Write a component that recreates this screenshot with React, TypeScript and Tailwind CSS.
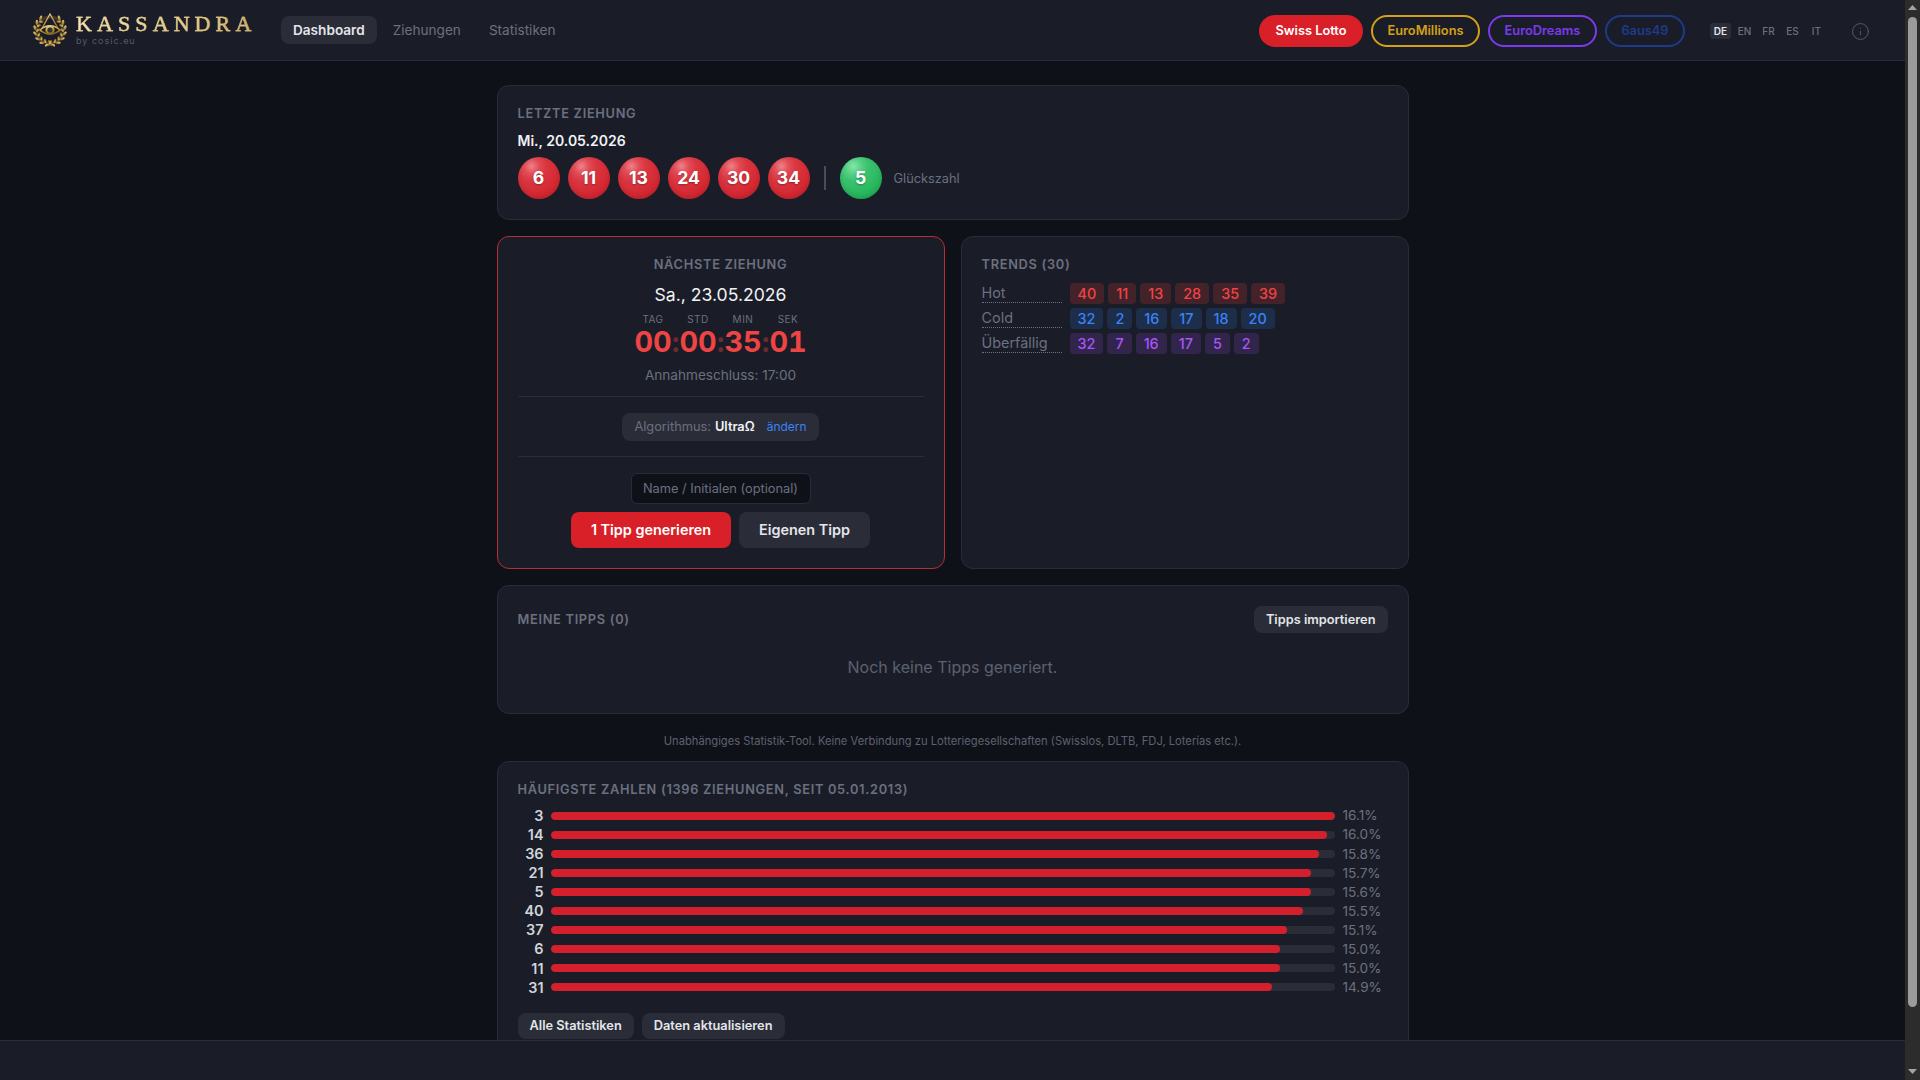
import { Info } from "lucide-react";

const lotteries = [
  { name: "Swiss Lotto", cls: "w-[104px] bg-[#d91f27] border-[#d91f27] text-white" },
  { name: "EuroMillions", cls: "w-[109px] border-[#d4a017] text-[#d4a017]" },
  { name: "EuroDreams", cls: "w-[109px] border-[#7c3aed] text-[#7c3aed]" },
  { name: "6aus49", cls: "w-[80px] border-[#1e3a8a] text-[#1e3a8a]" },
];

const trends = [
  { label: "Hot", nums: [40, 11, 13, 28, 35, 39], cls: "bg-[#442229] text-[#ef4444]" },
  { label: "Cold", nums: [32, 2, 16, 17, 18, 20], cls: "bg-[#1c2e4a] text-[#3b82f6]" },
  { label: "Überfällig", nums: [32, 7, 16, 17, 5, 2], cls: "bg-[#32254c] text-[#a855f7]" },
];

const frequent = [
  { n: 3, pct: "16.1%", w: 100 },
  { n: 14, pct: "16.0%", w: 99 },
  { n: 36, pct: "15.8%", w: 98 },
  { n: 21, pct: "15.7%", w: 97 },
  { n: 5, pct: "15.6%", w: 97 },
  { n: 40, pct: "15.5%", w: 96 },
  { n: 37, pct: "15.1%", w: 94 },
  { n: 6, pct: "15.0%", w: 93 },
  { n: 11, pct: "15.0%", w: 93 },
  { n: 31, pct: "14.9%", w: 92 },
];

const countdown = [
  { label: "TAG", value: "00" },
  { label: "STD", value: "00" },
  { label: "MIN", value: "35" },
  { label: "SEK", value: "01" },
];

const card = "rounded-[12px] border border-[#2a2d37] bg-[#1a1d27] px-5 pt-5 pb-5";
const sectionTitle = "text-[12.8px] leading-4 font-semibold tracking-[0.7px] uppercase text-[#6b7080]";
const grayBtn = "rounded-lg bg-[#2a2d37] text-[12.8px] font-semibold text-[#e4e6eb]";

function Logo() {
  const leaves = [0, 1, 2, 3, 4, 5, 6];
  return (
    <svg width="36" height="36" viewBox="0 0 36 36" className="shrink-0">
      <defs>
        <linearGradient id="gold" x1="0.3" y1="0" x2="0.6" y2="1">
          <stop offset="0" stopColor="#ead595" />
          <stop offset="0.55" stopColor="#b8923f" />
          <stop offset="1" stopColor="#7d5f22" />
        </linearGradient>
      </defs>
      <circle cx="18" cy="18" r="13" fill="none" stroke="#7d5f22" strokeWidth="3" opacity="0.45" />
      <g fill="url(#gold)">
        {leaves.map((i) => {
          const a = 38 + i * 22;
          return (
            <g key={i}>
              <ellipse cx="18" cy="2.9" rx="1.3" ry="2.7" transform={`rotate(${a} 18 18) rotate(-58 18 2.9)`} />
              <ellipse cx="18" cy="2.9" rx="1.3" ry="2.7" transform={`rotate(${-a} 18 18) rotate(58 18 2.9)`} />
              <ellipse cx="18" cy="6" rx="1.1" ry="2.2" transform={`rotate(${a + 8} 18 18) rotate(40 18 6)`} />
              <ellipse cx="18" cy="6" rx="1.1" ry="2.2" transform={`rotate(${-a - 8} 18 18) rotate(-40 18 6)`} />
            </g>
          );
        })}
      </g>
      <path d="M18 2 L27.5 19 L8.5 19 Z" fill="none" stroke="url(#gold)" strokeWidth="1.2" />
      <path d="M8 18 Q18 9.5 28 18 Q18 26.5 8 18 Z" fill="#211c10" stroke="url(#gold)" strokeWidth="1.5" />
      <circle cx="18" cy="18" r="4.6" fill="url(#gold)" />
      <circle cx="18" cy="18" r="2.6" fill="#2f3433" />
      <path d="M14 32.5 Q18 34.5 22 32.5" fill="none" stroke="url(#gold)" strokeWidth="1.2" />
    </svg>
  );
}

function Ball({ n, green }: { n: number; green?: boolean }) {
  return (
    <div
      className={`w-[42px] h-[42px] rounded-full flex items-center justify-center text-[17.6px] font-bold text-white [text-shadow:0_1px_2px_rgba(0,0,0,0.3)] shadow-[inset_0_-2px_5px_rgba(0,0,0,0.12)] ${
        green
          ? "bg-[radial-gradient(circle_at_32%_22%,#86e6aa_0%,#58d086_18%,#3ac26e_34%,#26b65c_70%,#1ea750_100%)]"
          : "bg-[radial-gradient(circle_at_32%_22%,#ee828a_0%,#e24b54_18%,#d93640_34%,#d42731_70%,#c3202a_100%)]"
      }`}
    >
      {n}
    </div>
  );
}

function Header() {
  return (
    <header className="h-[61px] shrink-0 flex items-center justify-between border-b border-[#2a2d37] bg-[#1a1d27] pl-[32px] pr-[35px]">
      <div className="flex items-center">
        <Logo />
        <div className="ml-2 w-[176px]">
          <div className="-mt-[2px] mb-[2px] font-['Liberation_Serif',serif] text-[22px] leading-[21px] tracking-[5.1px] [-webkit-text-stroke:0.35px_#e3cd8c] bg-[linear-gradient(90deg,#f3e6b8,#e3cd8c_60%,#c9ab62)] bg-clip-text text-transparent">
            KASSANDRA
          </div>
          <div className="text-[9px] leading-[10px] tracking-[1px] text-[#565a68]">by cosic.eu</div>
        </div>
        <nav className="ml-[29px] flex items-center gap-1 text-[13.6px]">
          <a className="h-7 px-3 flex items-center rounded-lg bg-[#2a2d37] font-semibold text-[#e4e6eb]">Dashboard</a>
          <a className="h-7 px-3 flex items-center text-[#6b7080]">Ziehungen</a>
          <a className="h-7 px-3 flex items-center text-[#6b7080]">Statistiken</a>
        </nav>
      </div>
      <div className="flex items-center pt-[2px]">
        <div className="flex gap-2">
          {lotteries.map((l) => (
            <button key={l.name} className={`h-8 rounded-full border-2 text-[12.8px] font-semibold ${l.cls}`}>
              {l.name}
            </button>
          ))}
        </div>
        <div className="ml-[25px] flex gap-[3px] text-[10px] font-medium text-[#6b7080]">
          {["DE", "EN", "FR", "ES", "IT"].map((l) => (
            <span
              key={l}
              className={`w-[21px] h-4 flex items-center justify-center rounded-[3px] ${
                l === "DE" ? "bg-[#2a2d37] text-[#e4e6eb] font-semibold" : ""
              }`}
            >
              {l}
            </span>
          ))}
        </div>
        <Info size={19} strokeWidth={1.25} className="ml-6 text-[#565a68]" />
      </div>
    </header>
  );
}

function LastDraw() {
  return (
    <section className={`${card} mb-4`}>
      <h2 className={sectionTitle}>Letzte Ziehung</h2>
      <div className="mt-[9px] text-sm leading-5 font-semibold text-[#f1f2f4]">Mi., 20.05.2026</div>
      <div className="mt-[6px] flex items-center gap-2">
        {[6, 11, 13, 24, 30, 34].map((n) => (
          <Ball key={n} n={n} />
        ))}
        <div className="w-[2px] h-6 mx-[6px] bg-[#4a4d57]" />
        <Ball n={5} green />
        <span className="ml-1 pt-[2px] text-[12.8px] text-[#6b7080]">Glückszahl</span>
      </div>
    </section>
  );
}

function NextDraw() {
  return (
    <section className="rounded-[12px] border border-[#b92d35] bg-[#1a1d27] px-5 pt-5 pb-5 flex flex-col items-center">
      <h2 className={sectionTitle}>Nächste Ziehung</h2>
      <div className="mt-[10px] text-[17.6px] leading-6 text-[#f1f2f4]">Sa., 23.05.2026</div>
      <div className="mt-[6px] flex items-end">
        {countdown.map((c, i) => (
          <div key={c.label} className="flex items-end">
            {i > 0 && <span className="w-[9px] text-center text-[28px] leading-7 font-bold text-[#ef4444]/40">:</span>}
            <div className="w-[36px] flex flex-col items-center">
              <span className="text-[10px] leading-3 tracking-[0.5px] text-[#6b7080]">{c.label}</span>
              <span className="mt-[3px] text-[28.8px] leading-7 font-bold tabular-nums text-[#ef4444]">{c.value}</span>
            </div>
          </div>
        ))}
      </div>
      <div className="mt-[9px] text-[13.6px] leading-5 text-[#6b7080]">Annahmeschluss: 17:00</div>
      <div className="mt-[11px] h-px w-full bg-[#2a2d37]" />
      <div className="mt-4 h-7 px-3 flex items-center rounded-lg bg-[#2a2d37] text-[12.8px] text-[#6b7080]">
        Algorithmus:
        <b className="ml-1 font-semibold text-[#f1f2f4]">UltraΩ</b>
        <a className="ml-3 text-xs text-[#3b82f6]">ändern</a>
      </div>
      <div className="mt-[15px] h-px w-full bg-[#2a2d37]" />
      <input
        placeholder="Name / Initialen (optional)"
        className="mt-4 w-[180px] h-[31px] rounded-md border border-[#2a2d37] bg-[#0f1118] text-center text-[12.8px] text-white placeholder:text-[#6b7080] outline-none"
      />
      <div className="mt-2 flex gap-2">
        <button className="w-[160px] h-9 rounded-lg bg-[#d91f27] text-[14.4px] font-semibold text-white">1 Tipp generieren</button>
        <button className="w-[131px] h-9 rounded-lg bg-[#2a2d37] text-[14.4px] font-semibold text-[#e4e6eb]">Eigenen Tipp</button>
      </div>
    </section>
  );
}

function Trends() {
  return (
    <section className={card}>
      <h2 className={sectionTitle}>Trends (30)</h2>
      <div className="mt-[10px] flex flex-col gap-1">
        {trends.map((t) => (
          <div key={t.label} className="flex items-start gap-2">
            <span className="w-20 pt-px text-[14.4px] leading-[18px] text-[#6b7080] border-b border-dotted border-[#6b7080]">{t.label}</span>
            <div className="flex gap-1">
              {t.nums.map((n, i) => (
                <span key={i} className={`h-[21px] px-2 flex items-center rounded text-[14.4px] font-medium ${t.cls}`}>
                  {n}
                </span>
              ))}
            </div>
          </div>
        ))}
      </div>
    </section>
  );
}

function MyTips() {
  return (
    <section className={card}>
      <div className="flex items-center justify-between">
        <h2 className={sectionTitle}>Meine Tipps (0)</h2>
        <button className={`${grayBtn} h-[27px] px-3`}>Tipps importieren</button>
      </div>
      <p className="pt-[22px] pb-[14px] text-center text-base text-[#5d6170]">Noch keine Tipps generiert.</p>
    </section>
  );
}

function Frequent() {
  return (
    <section className={card}>
      <h2 className={sectionTitle}>Häufigste Zahlen (1396 Ziehungen, seit 05.01.2013)</h2>
      <div className="mt-2">
        {frequent.map((f) => (
          <div key={f.n} className="h-[19.1px] flex items-center">
            <span className="w-[26px] text-right text-[14.4px] font-semibold text-[#d1d5db]">{f.n}</span>
            <div className="ml-[7px] w-[784px] h-2 rounded-full bg-[#2a2d37] overflow-hidden">
              <div className="h-full rounded-full bg-[#d4202c]" style={{ width: `${f.w}%` }} />
            </div>
            <span className="ml-2 text-[13.6px] text-[#6b7080]">{f.pct}</span>
          </div>
        ))}
      </div>
      <div className="mt-4 flex gap-2">
        <button className={`${grayBtn} h-[26px] px-3`}>Alle Statistiken</button>
        <button className={`${grayBtn} h-[26px] px-3`}>Daten aktualisieren</button>
      </div>
      <div className="h-10" />
    </section>
  );
}

function Scrollbar() {
  return (
    <div className="w-[15px] shrink-0 h-full bg-[#2c2c2c] flex flex-col items-center">
      <svg width="15" height="17" viewBox="0 0 15 17" className="shrink-0">
        <polygon points="7.5,5 12,10 3,10" fill="#a3a3a3" />
      </svg>
      <div className="w-[9px] h-[990px] rounded-full bg-[#9b9b9b]" />
      <div className="flex-1" />
      <svg width="15" height="17" viewBox="0 0 15 17" className="shrink-0">
        <polygon points="3,6 12,6 7.5,11" fill="#a3a3a3" />
      </svg>
    </div>
  );
}

export default function App() {
  return (
    <div className="w-full h-screen flex overflow-hidden bg-[#0f1118] font-['Inter',sans-serif]">
      <div className="relative flex-1 min-w-0 h-full flex flex-col overflow-hidden">
        <Header />
        <main className="flex-1 min-h-0 overflow-hidden pt-6">
          <div className="mx-auto w-[912px]">
            <LastDraw />
            <div className="grid grid-cols-2 gap-4 mb-4">
              <NextDraw />
              <Trends />
            </div>
            <MyTips />
            <p className="mt-[19px] mb-3 text-center text-[11.2px] leading-4 text-[#5d6170]">
              Unabhängiges Statistik-Tool. Keine Verbindung zu Lotteriegesellschaften (Swisslos, DLTB, FDJ, Loterías etc.).
            </p>
            <Frequent />
          </div>
        </main>
        {/* bottom bar sits over the page content */}
        <div className="absolute bottom-0 inset-x-0 h-10 border-t border-[#2a2d37] bg-[#1a1d27]" />
      </div>
      <Scrollbar />
    </div>
  );
}
